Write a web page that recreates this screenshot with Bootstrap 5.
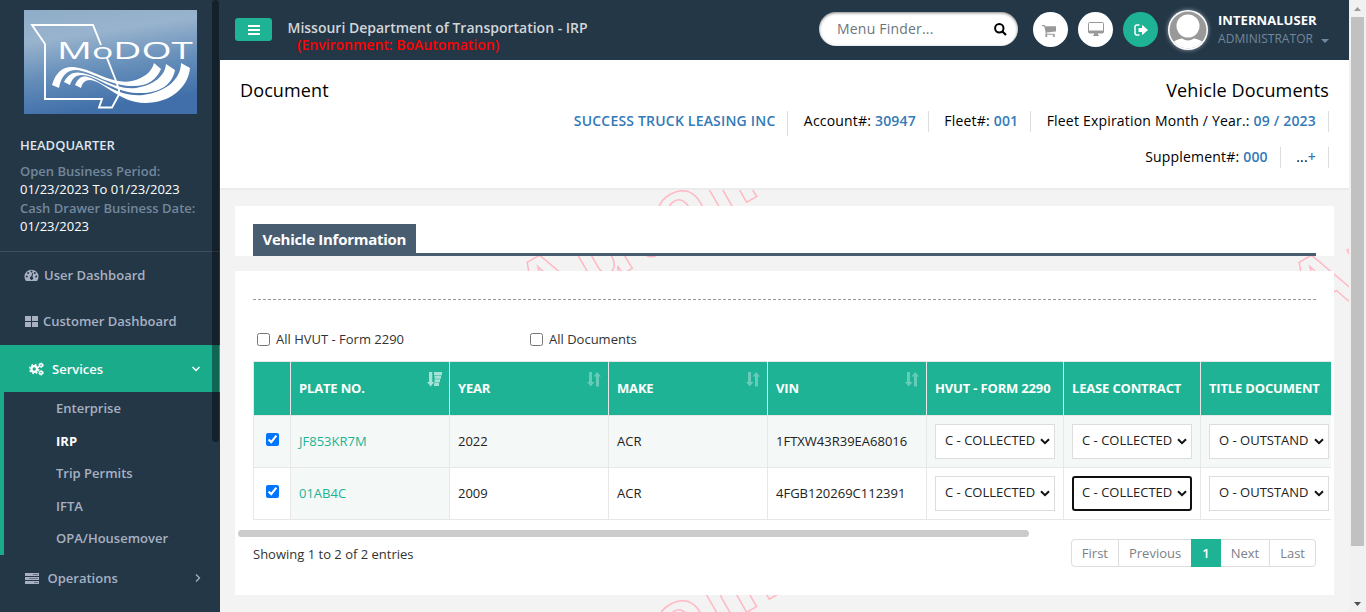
<!DOCTYPE html>
<html lang="en">
<head>
<meta charset="utf-8">
<title>Vehicle Documents</title>
<meta name="viewport" content="width=device-width, initial-scale=1">
<link rel="stylesheet" href="https://cdn.jsdelivr.net/npm/bootstrap@5.3.0/dist/css/bootstrap.min.css">
<style>
:root{--navy:#243747;--green:#1db394;--slate:#495d70}
html,body{height:612px;overflow:hidden}
body{font-family:"Open Sans",sans-serif;font-size:13px;line-height:18px;color:#222;background:#f3f3f3}
a{text-decoration:none}
svg{display:block;flex:none}
.sidebar{width:220px;height:612px;background:var(--navy);color:#a7b1c2;font-weight:600;overflow:hidden}
.side-thumb{left:212px;top:0;width:7px;height:442px;background:rgba(0,0,0,.4);border-radius:5px}
.brand{padding:10px 0 0 24px}
.office{padding:22px 0 0 20px;height:137px;line-height:18.4px;color:#73879c}
.office .dates{color:#fff;font-weight:500}
.office h6{font-size:13px;font-weight:600;color:#dfe4ed;margin:0 0 8px;line-height:18px}
.menu{border-top:1px solid #3d4f60}
.menu a{color:#a7b1c2}
.menu>a{height:46px;padding-left:24px}
.menu>a.open{height:47px;margin-top:1px;background:#1aab8b;color:#fff;padding-left:29px}
.submenu{border-left:4px solid #1aab8b;height:163px;padding-left:52px}
.submenu a{height:32.5px;line-height:33px;display:block}
.submenu a.current{color:#fff;font-weight:700}
.page{width:1129px;height:612px;overflow:hidden}
.topbar{height:60px;background:var(--navy)}
.btn-bars{width:37px;height:23px;margin:18px 0 0 15px;background:var(--green);border-radius:3px;padding:0 0 0 13px}
.agency{margin:18.5px 0 0 15.5px;font-size:14px;font-weight:600;line-height:17px;color:#d3d6d9}
.agency div{color:#f00;padding-left:9.5px}
.finder{width:199px;height:34px;margin-top:12px;border-radius:17px;background:#fff;box-shadow:inset 0 1px 3px rgba(0,0,0,.5);padding:0 11px 0 18px;font-size:14px;letter-spacing:.2px;color:#6c757d}
.round-btn{width:35px;height:35px;border-radius:50%;background:#fff;margin-top:12px}
.avatar{width:40px;height:40px;margin-top:10px;filter:drop-shadow(0 0 2px #9aa5b0)}
.who{margin:11px 0 0 10px;width:131px;line-height:18px;color:#fff;font-weight:700;letter-spacing:.05px}
.who div{color:#73879c;font-weight:400;font-size:12px;margin-top:1px}
.heading{position:relative;height:130px;background:#fff;border-bottom:2px solid #ebebeb;color:#000}
.heading h2{font-size:18px;font-weight:500;line-height:24px;margin:0;letter-spacing:.12px}
.facts{font-size:14px;font-weight:400;letter-spacing:.19px}
.facts span.item{height:21px;line-height:20px;border-right:1px solid #ddd;padding-right:12px;margin-left:15.4px}
.facts b{font-weight:600;color:#337ab7}
.content-area{position:relative;height:422px;padding:16px 15px 0}
.watermark{left:0;top:0;width:1129px;height:422px}
.panel{position:relative;background:#fff;width:1099px}
.panel.title{height:50px;padding:18px 18px 0}
.tab-line{border-bottom:3px solid var(--slate);height:32px}
.tab-line span{background:var(--slate);color:#fff;font-size:15px;font-weight:700;height:32px;line-height:31px;padding:0 10px 0 9.5px;display:inline-block;letter-spacing:-.28px}
.panel.grid-panel{height:324px;margin-top:15px;padding-top:28px}
.dash{margin:0 18px;border-top:1px dashed #999}
.checks{padding:29px 0 0 21.5px;height:61px}
.checks label{display:flex;align-items:center;height:20px;gap:6.5px;width:273px;color:#333}
input[type=checkbox]{width:13px;height:13px;margin:0;display:block}
.table-wrap{width:1078px;margin-left:18px;overflow:hidden}
.docs{width:1100px;table-layout:fixed;border-collapse:collapse;margin:0;color:#222}
.docs th,.docs td{border:1px solid #e7e7e7;padding:0 8px 2px;vertical-align:middle;white-space:nowrap}
.docs th{background:var(--green);color:#fff;height:54px;font-weight:700;font-size:13px;position:relative;letter-spacing:-.17px}
.docs th svg{position:absolute;right:7px;top:10px}
.docs td{height:52px}
.docs td.choice{padding-bottom:0}
.docs tr.odd td,.docs td.key{background:#f4f8f7}
.docs td.key a{color:var(--green)}
.docs td.pick{padding:0 0 4px 11.500px}
.form-select.pick-status{width:120px;height:35px;padding:0 17px 2px 9px;border:1px solid #ddd;border-radius:0;font-size:13px;line-height:31px;color:#222;background-color:#fff;background-size:10px 7px;background-position:right 4px center;background-image:url("data:image/svg+xml,%3Csvg xmlns='http://www.w3.org/2000/svg' viewBox='0 0 10 7'%3E%3Cpath d='M1 1.3 5 5.2 9 1.3' fill='none' stroke='%23111' stroke-width='2'/%3E%3C/svg%3E")}
.form-select.pick-status.active{border:2px solid #101010;border-radius:3px;padding-left:8px;padding-right:16px;line-height:29px;background-position:right 3px center}
.hbar{width:791px;height:7px;border-radius:4px;background:#cbcbcb;margin:10px 0 0 3px}
.foot{padding:2px 18px 0;color:#333}
.foot .pagination{margin:0}
.foot .page-link{font-size:13px;line-height:18px;height:28px;padding:4px 10px;color:#7b8187;border-color:#ddd;border-radius:0}
.foot .page-item:first-child .page-link{border-radius:4px 0 0 4px}
.foot .page-item:last-child .page-link{border-radius:0 4px 4px 0}
.foot .active .page-link{background:var(--green);border-color:var(--green);color:#fff;font-weight:600}
.page-scroll{width:17px;height:612px;background:#f1f1f1;padding:6px 2px 5px}
.page-scroll i{display:block;width:13px;height:529px;margin-top:6px;background:#c1c1c1}
</style>
</head>
<body class="d-flex">
<svg width="0" height="0" class="position-absolute" aria-hidden="true">
 <symbol id="sort" viewBox="0 0 14 15" preserveAspectRatio="none"><path d="M2 0h3v10h2.500L3.700 14.500 0 10h2zM9 14.500V4.500H6.500L10.200 0 14 4.500h-2v10z" fill="#8ed9c9" opacity=".65"/></symbol>
</svg>
<aside class="sidebar position-relative flex-shrink-0">
 <div class="brand">
  <svg width="173" height="104" viewBox="0 0 173 104">
   <defs><linearGradient id="sky" x1="0" y1="0" x2=".25" y2="1"><stop offset="0" stop-color="#8fadc8"/><stop offset=".3" stop-color="#98b3cd"/><stop offset=".65" stop-color="#648db9"/><stop offset="1" stop-color="#406fa9"/></linearGradient></defs>
   <rect width="173" height="104" fill="url(#sky)"/>
   <path d="M77 35 69 15H8l13 19v55h57l-3 8.500h13l7-13V80l-3-9-9-23" fill="none" stroke="#fff" stroke-width="1.900"/>
   <text x="33" y="49" font-family="Open Sans,sans-serif" font-weight="500" font-size="24" fill="#fff" textLength="136" lengthAdjust="spacingAndGlyphs">M<tspan font-size="22">o</tspan>DOT</text>
   <g fill="#fff">
    <path d="M28 75C32 61 40 56 50 57C70 59 86 75 108 71C121 68 128 61 130 53L137 59C132 71 122 77 106 76C84 75 67 61 52 60C42 60 37 67 35 78Z"/>
    <path d="M40 72C44 64 50 61 58 63C78 67 90 80 112 78C130 75 141 66 142 54L151 60C148 76 134 84 113 83C89 82 72 65 58 65C51 65 48 69 46 75Z"/>
    <path d="M51 75C55 66 60 65 67 68C82 75 97 87 119 85C142 82 157 69 157 53L166 58C164 78 146 93 121 93C96 93 81 72 66 70C61 70 58 73 57 78Z"/>
   </g>
  </svg>
 </div>
 <div class="office">
  <h6>HEADQUARTER</h6>
  <div>Open Business Period:</div><div class="dates">01/23/2023 To 01/23/2023</div>
  <div>Cash Drawer Business Date:</div><div class="dates">01/23/2023</div>
 </div>
 <nav class="menu">
  <a href="#" class="d-flex align-items-center"><svg width="15" height="12" viewBox="0 0 15 12" style="margin-right:5px"><path d="M2 12A7 7 0 1 1 13 12Z" fill="currentColor"/><g fill="#243747"><circle cx="2.800" cy="7.500" r="1"/><circle cx="4.200" cy="4" r="1"/><circle cx="7.500" cy="2.500" r="1"/><circle cx="10.800" cy="4" r="1"/><circle cx="12.200" cy="7.500" r="1"/><path d="m8.200 4 1 .2-.8 3.500a1.600 1.600 0 1 1-1.100-.2z"/></g></svg>User Dashboard</a>
  <a href="#" class="d-flex align-items-center"><svg width="13" height="11" viewBox="0 0 13 11" style="margin:0 5px 0 1px"><path d="M0 0h6v5H0zM7 0h6v5H7zM0 6h6v5H0zM7 6h6v5H7z" fill="currentColor"/></svg>Customer Dashboard</a>
  <a href="#" class="open d-flex align-items-center"><svg width="15" height="14" viewBox="0 0 15 14" style="margin-right:8px" fill="none" stroke="currentColor"><circle cx="5.200" cy="7" r="2.800" stroke-width="2.200"/><circle cx="5.200" cy="7" r="4.500" stroke-width="1.400" stroke-dasharray="1.770 1.770"/><circle cx="12" cy="3.200" r="1.500" stroke-width="1.500"/><circle cx="12" cy="3.200" r="2.400" stroke-width=".8" stroke-dasharray="1.250 1.250"/><circle cx="12" cy="10.800" r="1.500" stroke-width="1.500"/><circle cx="12" cy="10.800" r="2.400" stroke-width=".8" stroke-dasharray="1.250 1.250"/></svg>Services<svg class="ms-auto" width="10" height="6" viewBox="0 0 10 6" style="margin-right:19px"><path d="m1.500 1 3.500 3.500L8.500 1" fill="none" stroke="currentColor" stroke-width="1.500"/></svg></a>
  <div class="submenu"><a href="#">Enterprise</a><a href="#" class="current">IRP</a><a href="#">Trip Permits</a><a href="#">IFTA</a><a href="#">OPA/Housemover</a></div>
  <a href="#" class="d-flex align-items-center"><svg width="14" height="11" viewBox="0 0 14 11" style="margin:0 8.500px 0 1px"><path d="M0 0h14v3H0zM0 4h14v3H0zM0 8h14v3H0z" fill="currentColor"/><path d="M8 1.500h5M4 5.500h9M9 9.500h4" stroke="#243747" stroke-width=".5"/></svg>Operations<svg class="ms-auto" width="6" height="10" viewBox="0 0 6 10" style="margin-right:19px"><path d="M1 1.500 4.500 5 1 8.500" fill="none" stroke="currentColor" stroke-width="1.300"/></svg></a>
 </nav>
 <div class="side-thumb position-absolute"></div>
</aside>
<main class="page flex-shrink-0">
 <header class="topbar d-flex align-items-start">
  <button class="btn btn-bars d-flex align-items-center border-0"><svg width="12" height="10" viewBox="0 0 12 10"><path d="M0 1h12M0 5h12M0 9h12" stroke="#fff" stroke-width="2"/></svg></button>
  <div class="agency">Missouri Department of Transportation - IRP<div>(Environment: BoAutomation)</div></div>
  <div class="finder d-flex align-items-center justify-content-between ms-auto">Menu Finder...<svg width="13" height="13" viewBox="0 0 13 13"><circle cx="5.300" cy="5.300" r="4.200" fill="none" stroke="#000" stroke-width="2"/><path d="m8.500 8.500 3.500 3.500" stroke="#000" stroke-width="2.200"/></svg></div>
  <div class="round-btn d-flex align-items-center justify-content-center" style="margin-left:15px"><svg width="14" height="13" viewBox="0 0 1664 1536" style="margin:2px 3px 0 0"><path transform="translate(-64 -128)" d="M704 1536q0 52-38 90t-90 38-90-38-38-90 38-90 90-38 90 38 38 90zm896 0q0 52-38 90t-90 38-90-38-38-90 38-90 90-38 90 38 38 90zm128-1088v512q0 24-16.500 42.500t-40.500 21.500l-1044 122q13 60 13 70 0 16-24 64h920q26 0 45 19t19 45-19 45-45 19h-1024q-26 0-45-19t-19-45q0-11 8-31.500t16-36 21.500-40 15.500-29.500l-177-823h-204q-26 0-45-19t-19-45 19-45 45-19h256q16 0 28.500 6.500t19.500 15.500 13 24.500 8 26 5.500 29.500 4.500 26h1201q26 0 45 19t19 45z" fill="#999"/></svg></div>
  <div class="round-btn d-flex align-items-center justify-content-center" style="margin-left:10px"><svg width="16" height="14" viewBox="0 0 16 14" style="margin-top:-2px"><path d="M1.500.5h13a1 1 0 0 1 1 1v8.500a1 1 0 0 1-1 1h-13a1 1 0 0 1-1-1V1.500a1 1 0 0 1 1-1z" fill="#fff" stroke="#999"/><path d="M1 8.500h14V11H1zM6 11h4v2h1v1H5v-1h1z" fill="#999"/></svg></div>
  <div class="round-btn d-flex align-items-center justify-content-center" style="margin-left:10px;background:#1db394"><svg width="14" height="12" viewBox="0 0 14 12" style="margin:1px 0 0 1px"><path d="M5.500 1H3a2 2 0 0 0-2 2v6a2 2 0 0 0 2 2h2.500" fill="none" stroke="#fff" stroke-width="1.500"/><path d="M4.500 4H8V.8L14 6l-6 5.200V8H4.500z" fill="#fff"/></svg></div>
  <svg class="avatar" style="margin-left:10px" viewBox="0 0 40 40"><defs><clipPath id="face"><circle cx="20" cy="20" r="18.500"/></clipPath></defs><circle cx="20" cy="20" r="20" fill="#fff"/><g clip-path="url(#face)"><path d="M0 0h40v40H0z" fill="#999"/><circle cx="20" cy="16" r="11.500" fill="#fff"/><path d="M3 40c0-8 4-10 11-11.500 4 2.500 8 2.500 12 0C33 30 37 32 37 40z" fill="#fff"/></g></svg>
  <div class="who">INTERNALUSER<div class="d-flex align-items-center">ADMINISTRATOR<svg width="8" height="4" viewBox="0 0 8 4" style="margin:3px 0 0 8px"><path d="M0 0h8L4 4z" fill="currentColor"/></svg></div></div>
 </header>
 <section class="heading">
  <div class="d-flex justify-content-between" style="padding:18px 20px 0"><h2>Document</h2><h2>Vehicle Documents</h2></div>
  <div class="facts d-flex justify-content-end" style="padding:9px 20px 0"><span class="item" style="height:25px"><b>SUCCESS TRUCK LEASING INC</b></span><span class="item">Account#: <b>30947</b></span><span class="item">Fleet#: <b>001</b></span><span class="item">Fleet Expiration Month / Year.: <b>09 / 2023</b></span></div>
  <div class="facts d-flex justify-content-end" style="padding:11px 20px 0"><span class="item">Supplement#: <b>000</b></span><span class="item">...<b>+</b></span></div>
 </section>
 <section class="content-area">
  <svg class="watermark position-absolute" viewBox="220 190 1129 422" aria-hidden="true"><g fill="none" stroke="#ffb9c4" stroke-width="1.500" font-family="Liberation Sans,sans-serif" font-weight="700" font-size="84" letter-spacing="5"><text transform="translate(536 324) rotate(-30)">Autom</text><text transform="translate(1308 324) rotate(-30)">Au</text><text transform="translate(536 734) rotate(-30)">Autom</text></g></svg>
  <div class="panel title"><div class="tab-line"><span>Vehicle Information</span></div></div>
  <div class="panel grid-panel">
   <div class="dash"></div>
   <div class="checks d-flex"><label><input type="checkbox">All HVUT - Form 2290</label><label><input type="checkbox">All Documents</label></div>
   <div class="table-wrap">
    <table class="docs">
     <colgroup><col style="width:37px"><col style="width:159px"><col style="width:159px"><col style="width:159px"><col style="width:159px"><col style="width:137px"><col style="width:137px"><col style="width:153px"></colgroup>
     <thead><tr><th></th><th>PLATE NO.<svg width="15" height="15" viewBox="0 0 15 15"><path d="M2 0h3.300v10h2L3.700 14.500 0 10h2zM7 0h8v3.200H7zM7.500 3.700H14v3H7.500zM7.500 7.200H13v3H7.500zM7.200 10.700H12V14H7z" fill="#a5e1d4"/></svg></th><th>YEAR<svg width="14" height="15"><use href="#sort" width="14" height="15"/></svg></th><th>MAKE<svg width="14" height="15"><use href="#sort" width="14" height="15"/></svg></th><th>VIN<svg width="14" height="15"><use href="#sort" width="14" height="15"/></svg></th><th>HVUT - FORM 2290</th><th>LEASE CONTRACT</th><th>TITLE DOCUMENT</th></tr></thead>
     <tbody>
      <tr class="odd"><td class="pick"><input type="checkbox" checked></td><td class="key"><a href="#">JF853KR7M</a></td><td>2022</td><td>ACR</td><td>1FTXW43R39EA68016</td><td class="choice"><select class="form-select pick-status"><option>C - COLLECTED</option></select></td><td class="choice"><select class="form-select pick-status"><option>C - COLLECTED</option></select></td><td class="choice"><select class="form-select pick-status"><option>O - OUTSTAND</option></select></td></tr>
      <tr><td class="pick"><input type="checkbox" checked></td><td class="key"><a href="#">01AB4C</a></td><td>2009</td><td>ACR</td><td>4FGB120269C112391</td><td class="choice"><select class="form-select pick-status"><option>C - COLLECTED</option></select></td><td class="choice"><select class="form-select pick-status active"><option>C - COLLECTED</option></select></td><td class="choice"><select class="form-select pick-status"><option>O - OUTSTAND</option></select></td></tr>
     </tbody>
    </table>
   </div>
   <div class="hbar"></div>
   <div class="foot d-flex justify-content-between"><div style="padding-top:6px">Showing 1 to 2 of 2 entries</div>
    <ul class="pagination"><li class="page-item"><a class="page-link" href="#">First</a></li><li class="page-item"><a class="page-link" href="#">Previous</a></li><li class="page-item active"><a class="page-link" href="#">1</a></li><li class="page-item"><a class="page-link" href="#">Next</a></li><li class="page-item"><a class="page-link" href="#">Last</a></li></ul></div>
  </div>
 </section>
</main>
<div class="page-scroll flex-shrink-0 d-flex flex-column align-items-center">
 <svg width="7" height="5" viewBox="0 0 7 5"><path d="M0 5 3.500 1 7 5z" fill="#9a9a9a"/></svg><i></i>
 <svg class="mt-auto" width="7" height="5" viewBox="0 0 7 5"><path d="M0 0h7L3.500 4z" fill="#505050"/></svg>
</div>
<script src="https://cdn.jsdelivr.net/npm/bootstrap@5.3.0/dist/js/bootstrap.bundle.min.js"></script>
</body>
</html>
